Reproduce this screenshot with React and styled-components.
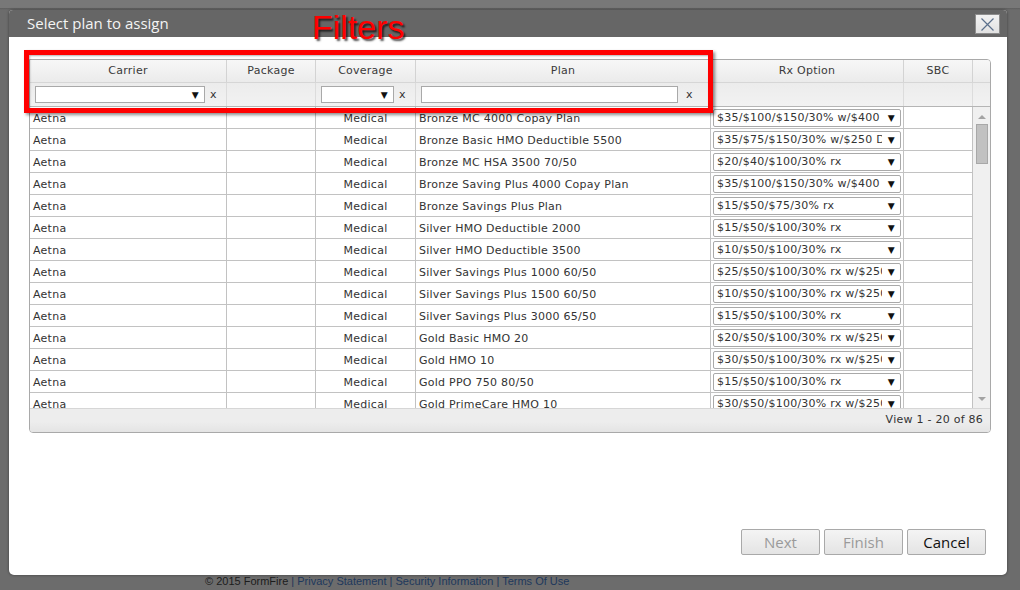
import React from 'react'
import styled, { createGlobalStyle } from 'styled-components'

const GlobalStyle = createGlobalStyle`
    html, body {
        margin: 0;
        padding: 0;
    }
    body {
        width: 1020px;
        height: 590px;
        overflow: hidden;
        background: linear-gradient(#787878 0, #787878 8px, #5e5e5e 8px, #6c6c6c 10px, #6c6c6c 100%);
        font-family: "DejaVu Sans", Verdana, sans-serif;
    }
`

const cols = [197, 89, 100, 295, 193, 69]

const plans = [
    ['Bronze MC 4000 Copay Plan', '$35/$100/$150/30% w/$400 Ded'],
    ['Bronze Basic HMO Deductible 5500', '$35/$75/$150/30% w/$250 Ded'],
    ['Bronze MC HSA 3500 70/50', '$20/$40/$100/30% rx'],
    ['Bronze Saving Plus 4000 Copay Plan', '$35/$100/$150/30% w/$400 Ded'],
    ['Bronze Savings Plus Plan', '$15/$50/$75/30% rx'],
    ['Silver HMO Deductible 2000', '$15/$50/$100/30% rx'],
    ['Silver HMO Deductible 3500', '$10/$50/$100/30% rx'],
    ['Silver Savings Plus 1000 60/50', '$25/$50/$100/30% rx w/$250 Ded'],
    ['Silver Savings Plus 1500 60/50', '$10/$50/$100/30% rx w/$250 Ded'],
    ['Silver Savings Plus 3000 65/50', '$15/$50/$100/30% rx'],
    ['Gold Basic HMO 20', '$20/$50/$100/30% rx w/$250 Ded'],
    ['Gold HMO 10', '$30/$50/$100/30% rx w/$250 Ded'],
    ['Gold PPO 750 80/50', '$15/$50/$100/30% rx'],
    ['Gold PrimeCare HMO 10', '$30/$50/$100/30% rx w/$250 Ded'],
]

const headers = ['Carrier', 'Package', 'Coverage', 'Plan', 'Rx Option', 'SBC']

const App = () => {
    return (
        <Page>
            <GlobalStyle />
            <Modal>
                <TitleBar>
                    <Title>Select plan to assign</Title>
                    <CloseButton>
                        <svg width="15" height="15" viewBox="0 0 15 15">
                            <path d="M1.5 1.5 L13.5 13.5 M13.5 1.5 L1.5 13.5" stroke="#5b708c" strokeWidth="1.2" fill="none" />
                        </svg>
                    </CloseButton>
                </TitleBar>
                <Body>
                    <Grid>
                        <HeaderRow>
                            {headers.map((h, i) => (
                                <HeadCell key={h} w={cols[i]}>{h}</HeadCell>
                            ))}
                            <HeadCell w={17} last />
                        </HeaderRow>
                        <FilterRow>
                            <FilterCell w={cols[0]}>
                                <FilterSelect w={170}><Arrow>▼</Arrow></FilterSelect>
                                <Clear>x</Clear>
                            </FilterCell>
                            <FilterCell w={cols[1]} />
                            <FilterCell w={cols[2]}>
                                <FilterSelect w={73}><Arrow>▼</Arrow></FilterSelect>
                                <Clear>x</Clear>
                            </FilterCell>
                            <FilterCell w={cols[3]}>
                                <FilterInput />
                                <Clear wide>x</Clear>
                            </FilterCell>
                            <FilterCell w={cols[4]} />
                            <FilterCell w={cols[5]} />
                            <FilterCell w={17} last />
                        </FilterRow>
                        <BodyArea>
                            <Rows>
                                {plans.map(([plan, rx]) => (
                                    <Row key={plan}>
                                        <Cell w={cols[0]}>Aetna</Cell>
                                        <Cell w={cols[1]} />
                                        <Cell w={cols[2]} center>Medical</Cell>
                                        <Cell w={cols[3]}>{plan}</Cell>
                                        <Cell w={cols[4]} pad={2}>
                                            <RxSelect>
                                                <RxText>{rx}</RxText>
                                                <Arrow>▼</Arrow>
                                            </RxSelect>
                                        </Cell>
                                        <Cell w={cols[5]} />
                                    </Row>
                                ))}
                            </Rows>
                            <Scrollbar>
                                <ScrollArrow up />
                                <Thumb />
                                <Spacer />
                                <ScrollArrow />
                            </Scrollbar>
                        </BodyArea>
                        <Pager>View 1 - 20 of 86</Pager>
                    </Grid>
                    <Spacer />
                    <Buttons>
                        <Button disabled>Next</Button>
                        <Button disabled>Finish</Button>
                        <Button>Cancel</Button>
                    </Buttons>
                </Body>
                <Annotation />
                <AnnotationLabel>Filters</AnnotationLabel>
            </Modal>
            <Footer>
                © 2015 FormFire <Sep>|</Sep> <FooterLink>Privacy Statement</FooterLink> <Sep>|</Sep> <FooterLink>Security Information</FooterLink> <Sep>|</Sep> <FooterLink>Terms Of Use</FooterLink>
            </Footer>
        </Page>
    )
}

const Page = styled.div`
    padding: 10px 0 0 9px;
`

const Modal = styled.div`
    position: relative;
    width: 998px;
    height: 565px;
    background: #fff;
    border-radius: 4px 4px 5px 5px;
    box-shadow: 0 0 3px rgba(0, 0, 0, 0.45);
    display: flex;
    flex-direction: column;
    overflow: hidden;
`

const TitleBar = styled.div`
    height: 27px;
    background: #666;
    display: flex;
    align-items: center;
    justify-content: space-between;
    padding: 0 7px 0 18px;
`

const Title = styled.div`
    color: #f4f4f4;
    font-family: "Open Sans", "Noto Sans", sans-serif;
    font-size: 15px;
    line-height: 27px;
`

const CloseButton = styled.div`
    width: 23px;
    height: 18px;
    margin-top: 1px;
    border: 1px solid #8d8d8d;
    background: linear-gradient(#f2f2f2, #e2e2e2);
    display: flex;
    align-items: center;
    justify-content: center;
`

const Body = styled.div`
    flex: 1;
    display: flex;
    flex-direction: column;
    padding: 22px 21px 20px 20px;
`

const Grid = styled.div`
    width: 960px;
    border: 1px solid #a9a9a9;
    border-radius: 0 4px 4px 4px;
    overflow: hidden;
    color: #333;
    font-size: 11px;
    letter-spacing: 0.25px;
`

const HeaderRow = styled.div`
    display: flex;
    height: 23px;
    background: linear-gradient(#f7f7f7, #ebebeb);
    border-bottom: 1px solid #d6d6d6;
    box-sizing: border-box;
`

const HeadCell = styled.div`
    width: ${props => props.w}px;
    flex: none;
    box-sizing: border-box;
    border-right: ${props => props.last ? 'none' : '1px solid #d3d3d3'};
    text-align: center;
    line-height: 22px;
    color: #3a3a3a;
`

const FilterRow = styled.div`
    display: flex;
    height: 24px;
    background: linear-gradient(#ececec, #f2f2f2);
    border-bottom: 1px solid #b5b5b5;
    box-sizing: border-box;
`

const FilterCell = styled.div`
    width: ${props => props.w}px;
    flex: none;
    box-sizing: border-box;
    border-right: ${props => props.last ? 'none' : '1px solid #dcdcdc'};
    display: flex;
    align-items: center;
    padding-left: 5px;
`

const FilterSelect = styled.div`
    width: ${props => props.w}px;
    height: 17px;
    box-sizing: border-box;
    border: 1px solid #a9a9a9;
    background: #fff;
    display: flex;
    align-items: center;
    justify-content: flex-end;
    padding-right: 5px;
`

const FilterInput = styled.div`
    width: 257px;
    height: 17px;
    box-sizing: border-box;
    border: 1px solid #a9a9a9;
    background: #fff;
`

const Clear = styled.span`
    margin-left: ${props => props.wide ? 8 : 5}px;
    font-size: 11px;
    color: #333;
`

const Arrow = styled.span`
    font-size: 9px;
    color: #111;
    flex: none;
`

const BodyArea = styled.div`
    display: flex;
    height: 301px;
`

const Rows = styled.div`
    width: 943px;
    overflow: hidden;
`

const Row = styled.div`
    display: flex;
    height: 22px;
    box-sizing: border-box;
    border-bottom: 1px solid #c2c2c2;
`

const Cell = styled.div`
    width: ${props => props.w}px;
    flex: none;
    box-sizing: border-box;
    border-right: 1px solid #c2c2c2;
    padding: 1px ${props => props.pad ?? 3}px 0;
    white-space: nowrap;
    overflow: hidden;
    display: flex;
    align-items: center;
    justify-content: ${props => props.center ? 'center' : 'flex-start'};
`

const RxSelect = styled.div`
    width: 188px;
    height: 18px;
    margin-top: -1px;
    box-sizing: border-box;
    border: 1px solid #a9a9a9;
    border-radius: 2px;
    background: #fff;
    display: flex;
    align-items: center;
    padding: 0 5px 0 3px;
    gap: 6px;
`

const RxText = styled.span`
    flex: 1;
    min-width: 0;
    overflow: hidden;
    white-space: nowrap;
    line-height: 16px;
`

const Scrollbar = styled.div`
    width: 17px;
    background: #f0f0f0;
    display: flex;
    flex-direction: column;
    align-items: center;
    padding: 8px 0 7px;
    box-sizing: border-box;
`

const ScrollArrow = styled.div`
    width: 0;
    height: 0;
    border-left: 4px solid transparent;
    border-right: 4px solid transparent;
    ${props => props.up
        ? 'border-bottom: 4px solid #a3a3a3;'
        : 'border-top: 4px solid #a3a3a3;'}
`

const Thumb = styled.div`
    margin-top: 5px;
    width: 12px;
    height: 40px;
    box-sizing: border-box;
    background: #c1c1c1;
    border: 1px solid #a8a8a8;
`

const Spacer = styled.div`
    flex: 1;
`

const Pager = styled.div`
    height: 24px;
    border-top: 1px solid #d6d6d6;
    box-sizing: border-box;
    background: linear-gradient(#ededed, #ededed 55%, #e4e4e4);
    text-align: right;
    padding-right: 7px;
    line-height: 22px;
    color: #333;
`

const Buttons = styled.div`
    display: flex;
    justify-content: flex-end;
    gap: 4px;
`

const Button = styled.div`
    width: 79px;
    height: 26px;
    box-sizing: border-box;
    border: 1px solid #a9a9a9;
    border-radius: 2px;
    background: linear-gradient(#f4f4f4, #e4e4e4);
    font-family: "Open Sans", "Noto Sans", sans-serif;
    font-size: 15px;
    line-height: 25px;
    text-align: center;
    color: ${props => props.disabled ? '#9a9a9a' : '#111'};
`

const Annotation = styled.div`
    position: absolute;
    left: 15px;
    top: 40px;
    width: 689px;
    height: 63px;
    box-sizing: border-box;
    border: 5px solid #ff0000;
    box-shadow: 2px 2px 3px rgba(0, 0, 0, 0.45), inset 1px 1px 2px rgba(0, 0, 0, 0.3);
    pointer-events: none;
`

const AnnotationLabel = styled.div`
    position: absolute;
    left: 303px;
    top: 0px;
    font-family: "Liberation Sans", Arial, sans-serif;
    font-size: 34px;
    line-height: 34px;
    color: #ff0000;
    text-shadow: 2px 2px 2px rgba(0, 0, 0, 0.7);
`

const Footer = styled.div`
    padding-left: 196px;
    font-family: "Liberation Sans", Arial, sans-serif;
    font-size: 11px;
    line-height: 12px;
    color: #1c1c1c;
`

const Sep = styled.span`
    color: #1c3559;
`

const FooterLink = styled.span`
    color: #20385c;
`

export default App
